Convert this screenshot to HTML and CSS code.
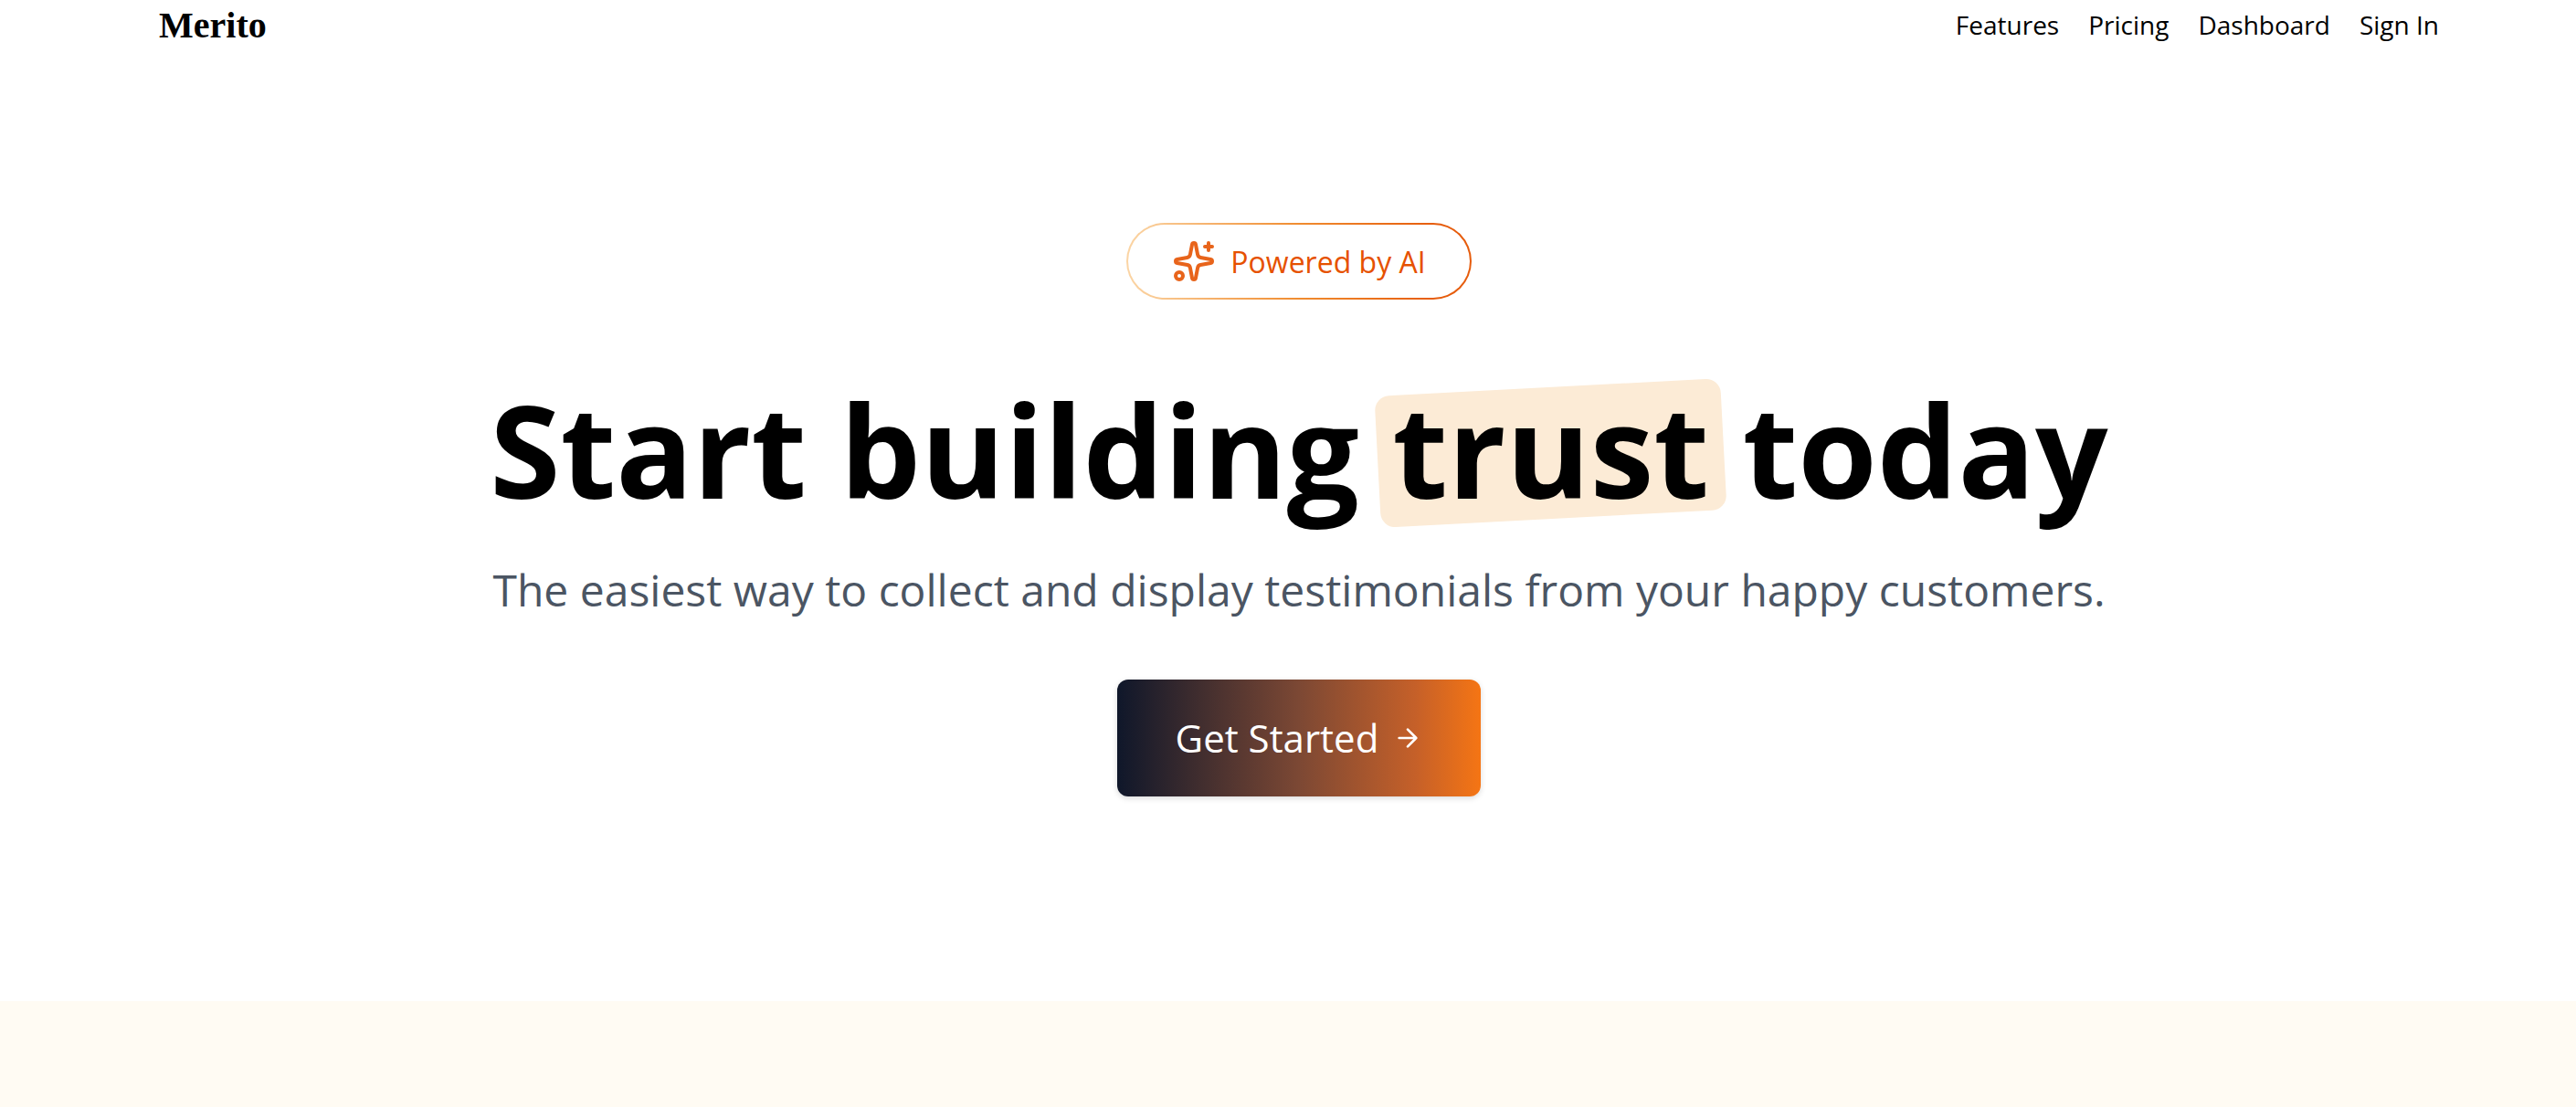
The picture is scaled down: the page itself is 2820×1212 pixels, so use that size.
FILE: index.html
```html
<!DOCTYPE html>
<html lang="en">
<head>
<meta charset="utf-8">
<title>Merito</title>
<link rel="stylesheet" href="styles.css">
</head>
<body>
<header class="nav">
  <a class="logo" href="#">Merito</a>
  <nav class="links">
    <a href="#features">Features</a>
    <a href="#pricing">Pricing</a>
    <a href="#dashboard">Dashboard</a>
    <a href="#signin">Sign In</a>
  </nav>
</header>
<main>
  <section class="hero">
    <div class="pill">
      <svg class="spark" viewBox="0 0 24 24" fill="none" stroke="currentColor" stroke-width="2" stroke-linecap="round" stroke-linejoin="round" aria-hidden="true">
        <path d="M11.017 2.814a1 1 0 0 1 1.966 0l1.051 5.558a2 2 0 0 0 1.594 1.594l5.558 1.051a1 1 0 0 1 0 1.966l-5.558 1.051a2 2 0 0 0-1.594 1.594l-1.051 5.558a1 1 0 0 1-1.966 0l-1.051-5.558a2 2 0 0 0-1.594-1.594l-5.558-1.051a1 1 0 0 1 0-1.966l5.558-1.051a2 2 0 0 0 1.594-1.594z"/>
        <path d="M20 2v4M22 4h-4"/>
        <circle cx="4" cy="20" r="2"/>
      </svg>
      <span>Powered by AI</span>
    </div>
    <h1>Start building <span class="mark">trust</span> today</h1>
    <p class="lead">The easiest way to collect and display testimonials from your happy customers.</p>
    <button class="cta" type="button">Get Started
      <svg class="arrow" viewBox="0 0 24 24" fill="none" stroke="currentColor" stroke-width="2" stroke-linecap="round" stroke-linejoin="round" aria-hidden="true"><path d="M5 12h14M12 5l7 7-7 7"/></svg>
    </button>
  </section>
  <section class="band"></section>
</main>
</body>
</html>
```
FILE: styles.css
```css
* { box-sizing: border-box; }
body {
  margin: 0;
  padding-left: 24px;
  min-height: 100vh;
  display: flex;
  flex-direction: column;
  background: #fff;
  color: #000;
  font-family: "Open Sans", sans-serif;
}
a { color: inherit; text-decoration: none; }
.nav {
  width: 100%;
  max-width: 2544px;
  margin: 0 auto;
  padding: 0 24px;
  height: 56px;
  display: flex;
  align-items: center;
  justify-content: space-between;
}
.logo { font: bold 40px/56px "Liberation Serif", serif; }
.links { display: flex; gap: 32px; font-size: 28px; line-height: 40px; padding-bottom: 2px; font-weight: 500; }
main { flex: 1; display: flex; flex-direction: column; }
.hero {
  display: flex;
  flex-direction: column;
  align-items: center;
  padding: 188px 0 224px;
}
.pill {
  height: 84px;
  padding: 0 48px;
  display: flex;
  align-items: center;
  gap: 16px;
  border: 2px solid transparent;
  border-radius: 42px;
  background: linear-gradient(#fff, #fff) padding-box, linear-gradient(90deg, #fbd5a5, #f08c30 50%, #e65c0c 90%) border-box;
  color: #e65100;
  font-size: 32px;
  font-weight: 500;
}
.spark { width: 48px; height: 48px; color: #e8641b; }
h1 {
  margin: 92px 0 0;
  font-size: 140px;
  line-height: 144px;
  font-weight: 700;
}
.mark { position: relative; display: inline-block; z-index: 0; }
.mark::before {
  content: "";
  position: absolute;
  inset: 4px -16px -4px;
  z-index: -1;
  border-radius: 16px;
  background: #fcebd6;
  transform: rotate(-3deg);
}
.lead {
  margin: 50px 0 0;
  font-size: 48px;
  line-height: 64px;
  color: #4b5563;
}
.cta {
  margin-top: 66px;
  height: 128px;
  padding: 0 64px;
  display: flex;
  align-items: center;
  gap: 16px;
  border: 0;
  border-radius: 12px;
  background: linear-gradient(90deg, #0f172a, #7c4834 50%, #c56029 82%, #f57514);
  box-shadow: 0 2px 6px rgba(0, 0, 0, .15);
  color: #fff;
  font: 500 42px/56px "Open Sans", sans-serif;
}
.arrow { width: 32px; height: 32px; }
.band { flex: 1; margin-left: -24px; background: #fffbf3; }
```
